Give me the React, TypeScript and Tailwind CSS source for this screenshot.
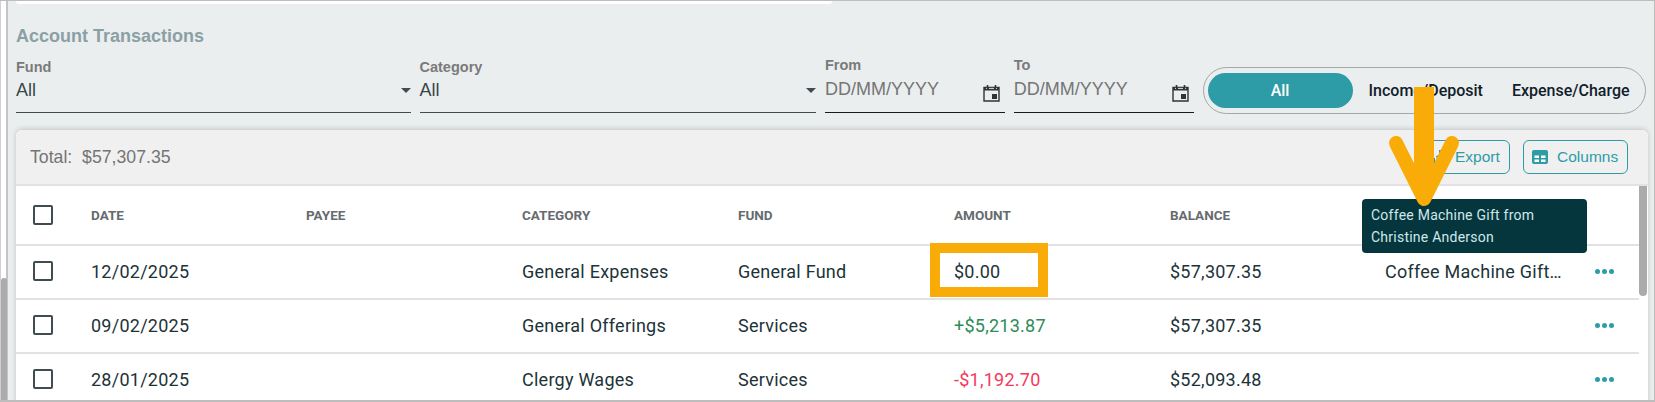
import React from "react";

const cols = "grid grid-cols-[75px_215px_216px_216px_216px_216px_215px_1fr] items-center";
const roboto = "font-['Roboto',sans-serif]";
const arial = "font-['Liberation_Sans',Arial,sans-serif]";

function Check() {
  return <div className="ml-[17px] w-5 h-5 border-2 border-[#3f4c50] rounded-[2px]" />;
}

function Caret() {
  return <div className="w-0 h-0 border-l-[5px] border-r-[5px] border-t-[5px] border-l-transparent border-r-transparent border-t-[#3f4c50]" />;
}

function Cal() {
  return (
    <svg width="17" height="18" viewBox="0 0 17 18" className="shrink-0">
      <path d="M1 3.5h15V17H1z" fill="none" stroke="#333" strokeWidth="1.4" />
      <path d="M1 3h15v3.5H1z" fill="#333" />
      <path d="M4.5 1v4M12.5 1v4" stroke="#333" strokeWidth="1.6" />
      <path d="M3 4.4h1M6 4.4h5M13 4.4h1" stroke="#ddd" strokeWidth="1" />
      <rect x="9" y="10" width="5" height="5" fill="#333" />
    </svg>
  );
}

function Select({ label, w }: { label: string; w: string }) {
  return (
    <div className={`${w} h-[59px] border-b border-[#3f4c50] relative`}>
      <div className={`text-[14.5px] leading-[16px] font-bold text-[#7a7a7a] mt-[5px]`}>{label}</div>
      <div className="flex items-center justify-between h-[24px] mt-[3px]">
        <span className="text-[18px] text-[#37474a]">All</span>
        <Caret />
      </div>
    </div>
  );
}

function DateField({ label }: { label: string }) {
  return (
    <div className="w-[180px] h-[59px] border-b border-[#1a1a1a]">
      <div className="text-[14.5px] leading-[16px] font-bold text-[#7a7a7a] mt-[3px]">{label}</div>
      <div className="flex items-center justify-between pr-[5px] h-[24px] mt-[4px]">
        <span className="text-[18px] text-[#757575]">DD/MM/YYYY</span>
        <div className="mt-[8px]"><Cal /></div>
      </div>
    </div>
  );
}

function Dots() {
  return (
    <div className="flex gap-[2px] ml-[11px]">
      <span className="w-[5px] h-[5px] rounded-full bg-[#2d9ca7]" />
      <span className="w-[5px] h-[5px] rounded-full bg-[#2d9ca7]" />
      <span className="w-[5px] h-[5px] rounded-full bg-[#2d9ca7]" />
    </div>
  );
}

const rows = [
  { d: "12/02/2025", c: "General Expenses", f: "General Fund", a: "$0.00", ac: "text-[#1c3338]", b: "$57,307.35", m: "Coffee Machine Gift…" },
  { d: "09/02/2025", c: "General Offerings", f: "Services", a: "+$5,213.87", ac: "text-[#2e8b57]", b: "$57,307.35", m: "" },
  { d: "28/01/2025", c: "Clergy Wages", f: "Services", a: "-$1,192.70", ac: "text-[#f4395b]", b: "$52,093.48", m: "" },
];

export default function App() {
  return (
    <div className={`relative w-[1655px] h-[402px] overflow-hidden flex bg-white border-t border-b-2 border-r border-[#bdbdbd] ${arial}`}>
      <div className="w-[8px] shrink-0 border-l border-r-2 border-l-[#d0d0d0] border-r-[#c4c4c4] pt-[277px]">
        <div className="h-full w-[6px] bg-[#ababab] rounded-t-[3px]" />
      </div>
      <div className="flex-1 bg-[#ebeeef] px-2 min-w-0">
        <div className="w-[816px] h-[3px] bg-white rounded-b-[6px]" />
        <h2 className="text-[18px] leading-[22px] font-bold text-[#8aa0a4] mt-[21px]">Account Transactions</h2>
        <div className="flex gap-[9px] mt-[7px]">
          <Select label="Fund" w="w-[395px]" />
          <Select label="Category" w="w-[397px]" />
          <DateField label="From" />
          <DateField label="To" />
          <div className="w-[444px] h-[47px] mt-[13px] border border-[#a6a6a6] rounded-[24px] flex items-center pl-[4px]">
            <div className={`w-[145px] h-[35px] rounded-[18px] bg-[#2d9ca7] text-white flex items-center justify-center text-[16px] font-medium ${roboto}`}>All</div>
            <span className={`ml-[16px] text-[16px] font-medium text-[#10202a] ${roboto}`}>Income/Deposit</span>
            <span className={`ml-[29px] text-[16px] font-medium text-[#10202a] ${roboto}`}>Expense/Charge</span>
          </div>
        </div>
        <div className="mt-[16px] w-[1632px] rounded-t-[6px] bg-white shadow-[0_-1px_5px_rgba(0,0,0,0.18)] overflow-hidden">
          <div className="h-[56px] bg-[#f0f0f0] border-b-2 border-[#e2e2e2] flex items-center pl-[14px] pr-[20px]">
            <span className="text-[17.7px] text-[#757575] whitespace-pre">Total:  $57,307.35</span>
            <div className="ml-auto flex gap-[13px]">
              <button className="w-[87px] h-[34px] rounded-[6px] border border-[#2d9ca7] flex items-center pl-[8px] gap-[7px] text-[15.5px] text-[#2d9ca7]">
                <svg width="16" height="16" viewBox="0 0 16 16"><path d="M2 9v5h12V9M8 1v9M4.5 7 8 10.5 11.5 7" fill="none" stroke="#2d9ca7" strokeWidth="2" /></svg>
                Export
              </button>
              <button className="w-[105px] h-[34px] rounded-[6px] border border-[#2d9ca7] flex items-center pl-[8px] gap-[9px] text-[15.5px] text-[#2d9ca7]">
                <svg width="16" height="14" viewBox="0 0 16 14">
                  <rect width="16" height="14" rx="2" fill="#2d9ca7" />
                  <path d="M2.5 5.5h4.5v2.5H2.5zM9 5.5h4.5v2.5H9zM2.5 9.5h4.5V12H2.5zM9 9.5h4.5V12H9z" fill="#fff" />
                </svg>
                Columns
              </button>
            </div>
          </div>
          <div className="flex">
            <div className={`flex-1 min-w-0 ${roboto}`}>
              <div className={`${cols} h-[60px] border-b-2 border-[#e2e2e2] text-[13.5px] font-bold text-[#666b6e]`}>
                <Check />
                <span>DATE</span>
                <span>PAYEE</span>
                <span>CATEGORY</span>
                <span>FUND</span>
                <span>AMOUNT</span>
                <span>BALANCE</span>
                <span />
              </div>
              {rows.map((r) => (
                <div key={r.d} className={`${cols} h-[54px] pb-[2px] border-b-2 border-[#e2e2e2] text-[18px] text-[#1c3338] tracking-[0.25px]`}>
                  <Check />
                  <span>{r.d}</span>
                  <span />
                  <span>{r.c}</span>
                  <span>{r.f}</span>
                  <span className={r.ac}>{r.a}</span>
                  <span>{r.b}</span>
                  <div className="flex items-center">
                    <span className="w-[199px] whitespace-nowrap overflow-hidden">{r.m}</span>
                    <Dots />
                  </div>
                </div>
              ))}
            </div>
            <div className="w-[9px] shrink-0">
              <div className="w-[8px] h-[110px] bg-[#ababab] rounded-b-[4px]" />
            </div>
          </div>
        </div>
      </div>
      <div className={`absolute left-[1362px] top-[198px] w-[225px] h-[54px] rounded-[4px] bg-[#05363d] text-[#cfe8ea] text-[14px] tracking-[0.24px] leading-[22px] px-[9px] py-[5px] ${roboto}`}>
        Coffee Machine Gift from Christine Anderson
      </div>
      <div className="absolute left-[930px] top-[242px] w-[118px] h-[54px] border-[10px] border-[#f9ab07]" />
      <svg className="absolute left-[1385px] top-[79px]" width="80" height="130" viewBox="0 0 80 130">
        <path d="M39 7V115" stroke="#f9ab07" strokeWidth="20" />
        <path d="M11 63 39 119 67 63" fill="none" stroke="#f9ab07" strokeWidth="14" strokeLinecap="round" strokeLinejoin="round" />
      </svg>
    </div>
  );
}
